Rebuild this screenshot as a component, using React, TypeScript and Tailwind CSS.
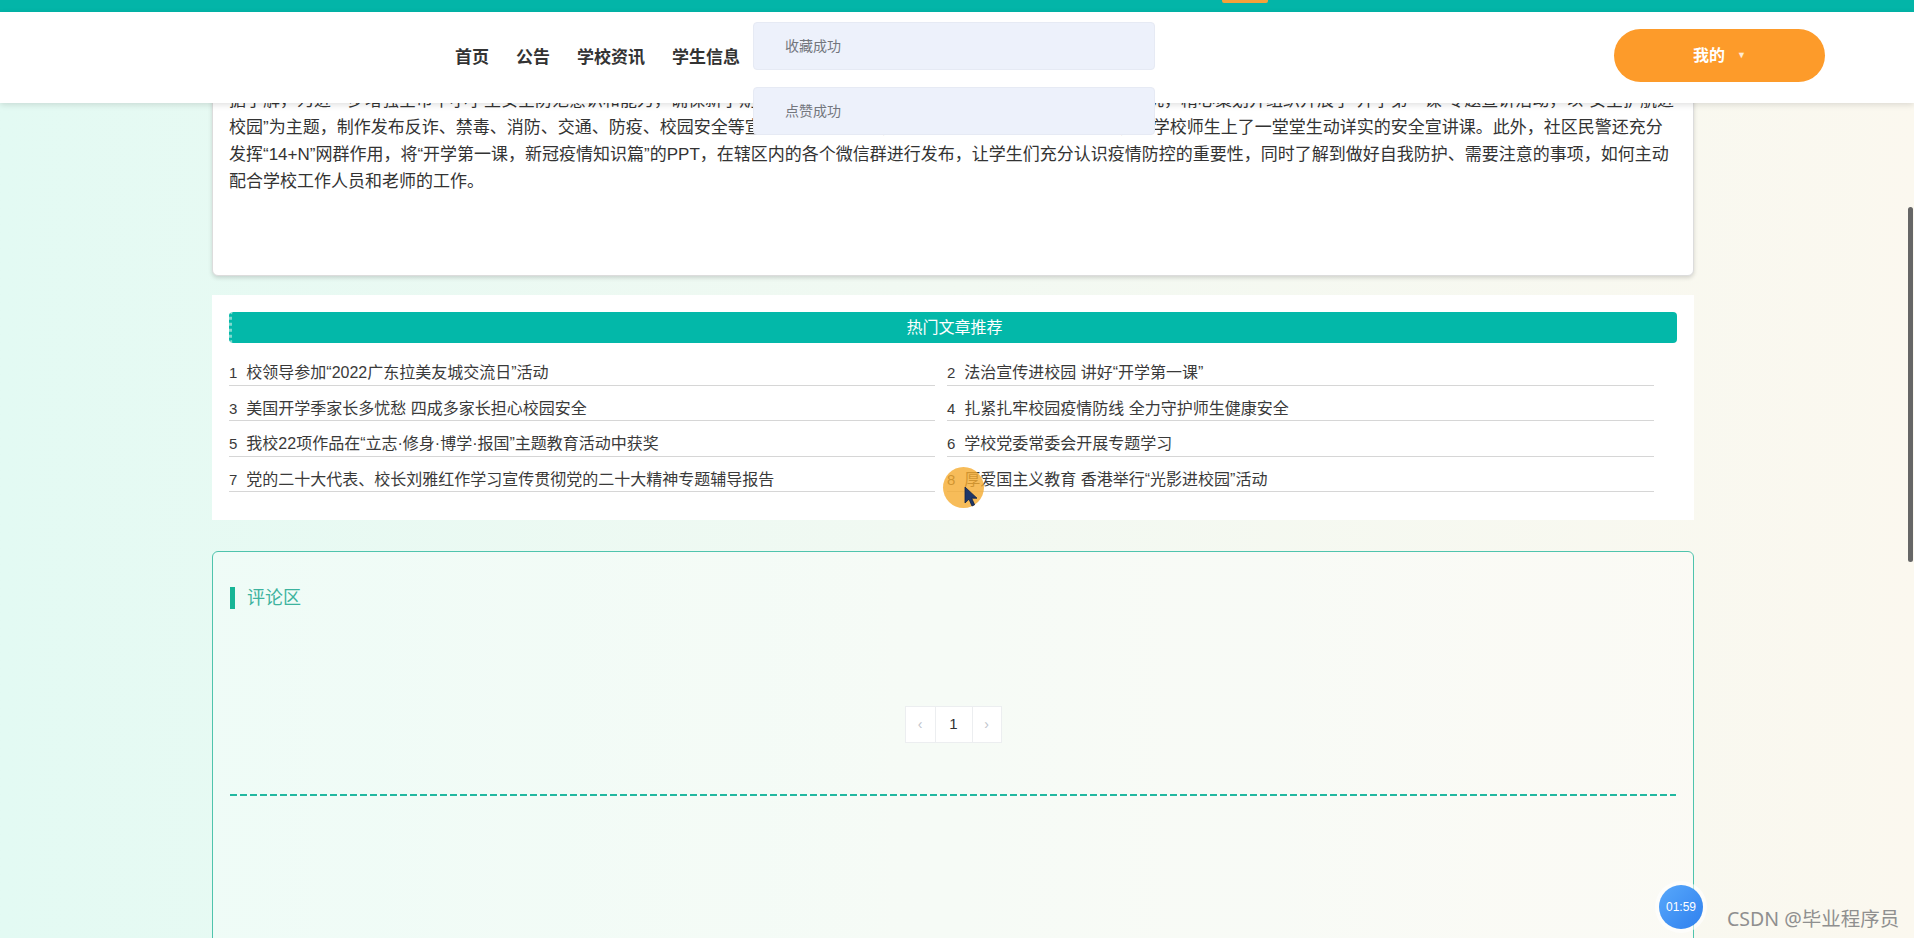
const navItems = ["首页", "公告", "学校资讯", "学生信息"];

const hotArticles = [
  "校领导参加“2022广东拉美友城交流日”活动",
  "法治宣传进校园 讲好“开学第一课”",
  "美国开学季家长多忧愁 四成多家长担心校园安全",
  "扎紧扎牢校园疫情防线 全力守护师生健康安全",
  "我校22项作品在“立志·修身·博学·报国”主题教育活动中获奖",
  "学校党委常委会开展专题学习",
  "党的二十大代表、校长刘雅红作学习宣传贯彻党的二十大精神专题辅导报告",
  "厚爱国主义教育 香港举行“光影进校园”活动",
];

const articleText =
  "据了解，为进一步增强全市中小学生安全防范意识和能力，确保新学期校园安全稳定，全市各区派出所民警结合辖区实际情况，精心策划并组织开展了“开学第一课”专题宣讲活动，以“安全护航进" +
  "校园”为主题，制作发布反诈、禁毒、消防、交通、防疫、校园安全等宣传海报及短视频，民警们还走进辖区各中小学校，为学校师生上了一堂堂生动详实的安全宣讲课。此外，社区民警还充分" +
  "发挥“14+N”网群作用，将“开学第一课，新冠疫情知识篇”的PPT，在辖区内的各个微信群进行发布，让学生们充分认识疫情防控的重要性，同时了解到做好自我防护、需要注意的事项，如何主动" +
  "配合学校工作人员和老师的工作。";

function Toast({ text, top }: { text: string; top: string }) {
  return (
    <div
      className={`absolute left-[753px] ${top} z-30 flex h-[48px] w-[402px] items-center rounded-[4px] border border-[#e6eaf4] bg-[#edf1fb] pl-[31px] text-[14px] text-[#73767d]`}
    >
      {text}
    </div>
  );
}

export default function App() {
  return (
    <div className="relative h-[938px] w-full overflow-hidden bg-linear-to-r from-[#e3faf3] via-[#f2f9f2] to-[#fbf8ef] font-['Liberation_Sans','Noto_Sans_CJK_SC',sans-serif] text-[#333]">
      {/* Header */}
      <header className="absolute inset-x-0 top-0 z-20">
        <div className="h-[12px] bg-[#03b5a8]" />
        <div className="flex h-[91px] items-start bg-white shadow-[0_2px_6px_rgba(0,0,0,0.12)]">
          <nav className="ml-[455px] mt-[34px] flex gap-[27px] text-[17px] font-bold leading-[24px] text-[#333]">
            {navItems.map((item) => (
              <span key={item}>{item}</span>
            ))}
          </nav>
          <button className="ml-auto mr-[89px] mt-[17px] flex h-[53px] w-[211px] items-center justify-center gap-[12px] rounded-full bg-[#fd9b2a] text-[16px] font-bold text-white">
            我的
            <span className="text-[9px] text-white/80">▼</span>
          </button>
        </div>
      </header>
      <div className="absolute left-[1222px] top-0 z-30 h-[3px] w-[46px] rounded-b-[2px] bg-[#f6a13a]" />

      {/* Messages */}
      <Toast text="收藏成功" top="top-[22px]" />
      <Toast text="点赞成功" top="top-[87px]" />

      {/* Content */}
      <main className="flex justify-center pr-[8px] pt-[44px]">
        <div className="w-[1482px]">
          {/* Article body */}
          <article className="rounded-[6px] border border-[#dcdcdc] bg-white px-[16px] pb-[80px] pt-[42px] shadow-[0_2px_4px_rgba(0,0,0,0.15)]">
            <p className="text-[17px] leading-[27px] text-[#333]">{articleText}</p>
          </article>

          {/* Hot articles */}
          <section className="mt-[19px] bg-white px-[17px] pb-[28px] pt-[17px]">
            <div className="flex h-[31px] items-center justify-center rounded-[4px] border-l-[3px] border-dotted border-l-[#7fd9cf] bg-[#03b8a9] text-[16px] text-white">
              热门文章推荐
            </div>
            <ul className="mt-[7px] grid grid-cols-[706px_707px] gap-x-[12px]">
              {hotArticles.map((title, i) => (
                <li
                  key={title}
                  className="flex h-[35.5px] border-b border-[#d6d6d6] pt-[13px] text-[16px] leading-[20px] text-[#3a3a3a]"
                >
                  <span className="mr-[9px] text-[15px]">{i + 1}</span>
                  <span>{title}</span>
                </li>
              ))}
            </ul>
          </section>

          {/* Comments */}
          <section className="mt-[31px] h-[420px] rounded-[6px] border border-[#4fc4ad] bg-white/35 px-[17px] pt-[35px]">
            <div className="flex items-center gap-[12px]">
              <span className="h-[22px] w-[5px] bg-[#17b596]" />
              <span className="text-[18px] leading-[22px] text-[#3db39e]">评论区</span>
            </div>
            <div className="mt-[97px] flex justify-center">
              <div className="flex h-[37px] bg-white text-[14px]">
                <span className="flex w-[31px] items-center justify-center border border-[#eceef0] text-[#c0c4cc]">‹</span>
                <span className="flex w-[36px] items-center justify-center border-y border-[#eceef0] text-[15px] text-[#303133]">1</span>
                <span className="flex w-[30px] items-center justify-center border border-[#eceef0] text-[#c0c4cc]">›</span>
              </div>
            </div>
            <div className="mt-[51px] h-[2px] bg-[repeating-linear-gradient(90deg,#22b8a0_0_7px,transparent_7px_10px)]" />
          </section>
        </div>
      </main>

      {/* Cursor highlight */}
      <div className="absolute left-[943px] top-[467px] z-10 h-[41px] w-[41px] rounded-full bg-[#f5ab30]/80" />
      <svg className="absolute left-[964px] top-[486px] z-10" width="14" height="21" viewBox="0 0 14 21">
        <path d="M1 1 L1 17 L5 13.2 L8 20 L10.6 18.8 L7.7 12.2 L13 12.2 Z" fill="#1f3769" stroke="#0f1f44" strokeWidth="0.8" />
      </svg>

      {/* Scrollbar thumb */}
      <div className="absolute right-[1px] top-[207px] z-30 h-[355px] w-[5px] rounded-full bg-[#666]" />

      {/* Timer badge */}
      <div className="absolute left-[1659px] top-[885px] z-10 flex h-[44px] w-[44px] items-center justify-center rounded-full bg-linear-to-br from-[#58a8fb] to-[#2f80ee] text-[12px] text-white ring-4 ring-white/60">
        01:59
      </div>

      {/* Watermark */}
      <div className="absolute left-[1727px] top-[906px] z-10 font-['Noto_Sans','Noto_Sans_CJK_SC',sans-serif] text-[19.5px] leading-[26px] text-[#8f8f8f]">
        CSDN @毕业程序员
      </div>
    </div>
  );
}
